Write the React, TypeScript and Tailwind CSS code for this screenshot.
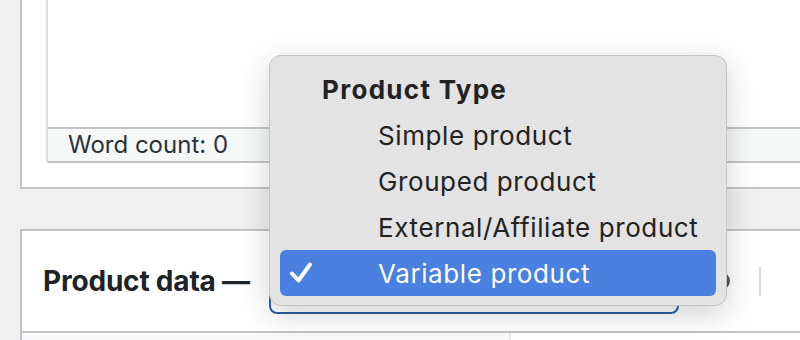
import React from "react";

const font = { fontFamily: "Inter, 'Noto Sans', sans-serif" };

export default function App() {
  const items = ["Simple product", "Grouped product", "External/Affiliate product"];
  return (
    <div className="relative w-[800px] h-[340px] overflow-hidden bg-[#f0f0f1]" style={font}>
      {/* Top postbox (editor) */}
      <div className="ml-[20px] h-[189px] bg-white border-l-2 border-b-2 border-[#c3c4c7] pl-[24px] pb-[24px] flex flex-col">
        <div className="flex-1 flex flex-col border-l-2 border-[#dcdcde]">
          <div className="flex-1 bg-white" />
          <div className="h-[36px] bg-[#f6f7f7] border-t-2 border-b-2 border-[#c3c4c7] flex items-center pl-[20px] text-[24px] text-[#2c3338]">
            Word count: 0
          </div>
        </div>
      </div>

      {/* Bottom postbox (product data) */}
      <div className="mt-[40px] ml-[20px] bg-white border-l-2 border-t-2 border-[#c3c4c7]">
        <div className="h-[102px] border-b-2 border-[#c3c4c7] flex items-center pl-[21px]">
          <span className="w-[226px] shrink-0 text-[28px] font-bold text-[#1d2327] whitespace-nowrap tracking-[-0.2px]">Product data —</span>
          <div className="w-[410px] h-[66px] rounded-[8px] border-2 border-[#2c5f9e] bg-white shrink-0" />
          <div className="ml-[33px] w-[18px] h-[18px] rounded-full bg-[#50575e] shrink-0" />
          <div className="ml-[29px] w-[2px] h-[29px] bg-[#dcdcde] shrink-0" />
        </div>
        <div className="flex h-[20px]">
          <div className="w-[489px] bg-[#fafafa] border-r-2 border-[#eeeeee]" />
          <div className="flex-1 bg-white" />
        </div>
      </div>

      {/* Native select popup menu */}
      <div className="absolute left-[269px] top-[55px] w-[458px] h-[251px] rounded-[12px] bg-[#e3e3e3] border border-[#c4c4c4] shadow-[0_8px_30px_rgba(0,0,0,0.18)] pt-[10px] px-[10px] text-[26px] text-[#222222] tracking-[0.6px]">
        <div className="h-[46px] flex items-center pl-[42px] font-bold tracking-[1.3px]">Product Type</div>
        {items.map((t) => (
          <div key={t} className="h-[46px] flex items-center pl-[98px] whitespace-nowrap">
            {t}
          </div>
        ))}
        <div className="h-[46px] flex items-center rounded-[6px] bg-[#4a80df] text-white relative">
          <svg className="absolute left-[9px] top-[12px]" width="24" height="22" viewBox="0 0 24 22">
            <path d="M3 11.5 L9.5 18.5 L21 2.5" fill="none" stroke="white" strokeWidth="4" strokeLinecap="round" strokeLinejoin="round" />
          </svg>
          <span className="pl-[98px]">Variable product</span>
        </div>
      </div>
    </div>
  );
}
